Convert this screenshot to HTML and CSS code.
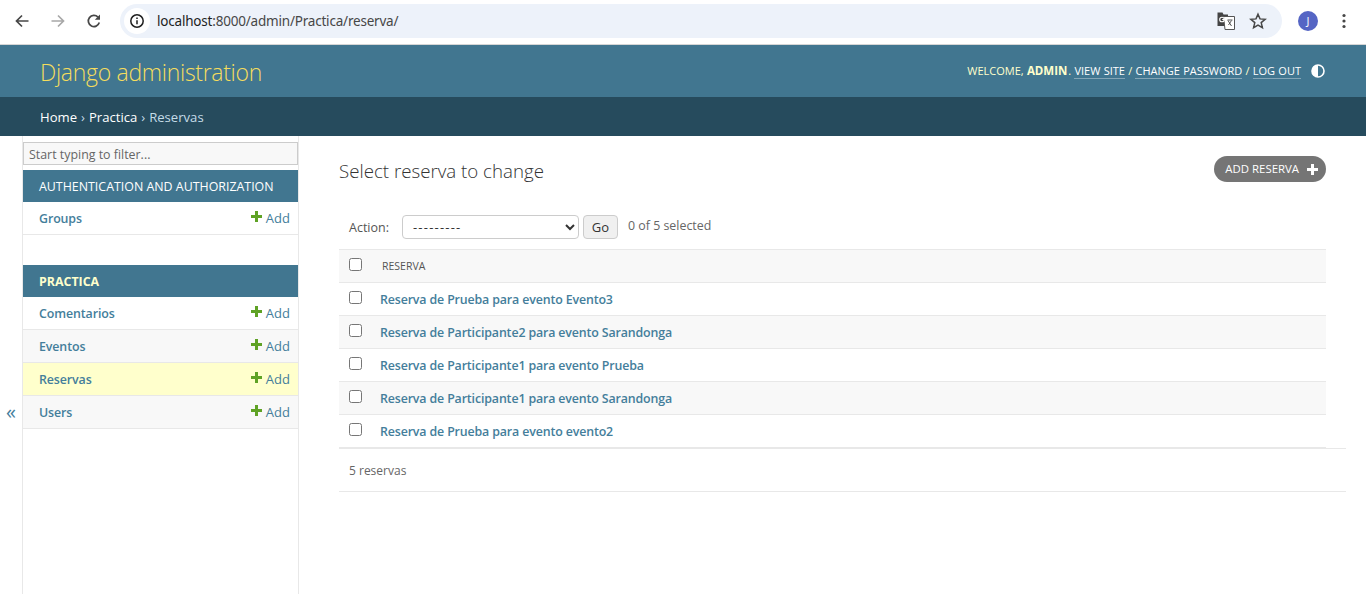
FILE: index.html
```html
<!doctype html>
<html lang="en">
<head>
  <meta charset="utf-8"/>
  <title>Select reserva to change | Django site admin</title>
  <link rel="stylesheet" href="styles.css">
</head>
<body>

  <div class="chrome">
    <svg class="nav-icon" width="16" height="16" viewBox="0 0 16 16"><path d="M14.5 8H2.5M8 2.5 2.5 8 8 13.5" fill="none" stroke="#474747" stroke-width="1.7"/></svg>
    <svg class="nav-icon" width="16" height="16" viewBox="0 0 16 16"><path d="M1.5 8h12M8 2.5 13.5 8 8 13.5" fill="none" stroke="#a8a8a8" stroke-width="1.7"/></svg>
    <svg class="nav-icon" width="16" height="16" viewBox="0 0 16 16"><path d="M13.3 9.6A5.6 5.6 0 1 1 12 4.1" fill="none" stroke="#474747" stroke-width="1.7"/><path d="M14 1.6v5.2H8.8z" fill="#474747"/></svg>
    <div class="omnibox">
      <span class="site-info">
        <svg width="16" height="16" viewBox="0 0 16 16"><circle cx="8" cy="8" r="6.2" fill="none" stroke="#1f1f1f" stroke-width="1.5"/><path d="M8 7.2v4M8 4.6v1.5" stroke="#1f1f1f" stroke-width="1.5"/></svg>
      </span>
      <span class="url">localhost<span class="url-rest">:8000/admin/Practica/reserva/</span></span>
      <svg class="translate" width="18" height="18" viewBox="0 0 18 18"><path d="M0.500 0.500h5l1 2h4.500v11.500H0.500z" fill="#444"/><path d="M6.500 4.500h11v13H8z" fill="#fff" stroke="#555" stroke-width="1"/><circle cx="5" cy="7.500" r="2.300" fill="none" stroke="#fff" stroke-width="1.100"/><path d="M5.200 7.500h2.200" stroke="#fff" stroke-width="1"/><path d="M10.500 8h5M11 8.500l3.500 5.500M14.500 8.500l-3 4.500" stroke="#555" stroke-width="1" fill="none"/></svg>
      <svg class="star" width="18" height="18" viewBox="0 0 18 18"><path d="M9 2.200 11 6.900l5.100.4-3.900 3.300 1.200 5L9 13l-4.400 2.600 1.200-5-3.900-3.300 5.100-.4z" fill="none" stroke="#474747" stroke-width="1.500"/></svg>
    </div>
    <span class="avatar">J</span>
    <svg class="kebab" width="4" height="16" viewBox="0 0 4 16"><circle cx="2" cy="2.500" r="1.600" fill="#474747"/><circle cx="2" cy="8" r="1.600" fill="#474747"/><circle cx="2" cy="13.500" r="1.600" fill="#474747"/></svg>
  </div>

  <header class="site-header">
    <h1 class="branding">Django administration</h1>
    <div class="user-tools">
      Welcome, <strong>admin</strong>. <a href="#">View site</a> / <a href="#">Change password</a> / <a href="#">Log out</a><svg class="theme" width="14" height="14" viewBox="0 0 14 14"><circle cx="7" cy="7" r="6" fill="none" stroke="#fff" stroke-width="1.600"/><path d="M7 1a6 6 0 0 0 0 12z" fill="#fff"/></svg>
    </div>
  </header>

  <nav class="breadcrumbs"><a href="#">Home</a> &rsaquo; <a href="#">Practica</a> &rsaquo; Reservas</nav>

  <div class="layout">
    <div class="toggle">&laquo;</div>

    <aside class="sidebar">
      <input class="filter" type="text" placeholder="Start typing to filter...">

      <div class="app">
        <div class="app-title">Authentication and Authorization</div>
        <div class="model"><a href="#">Groups</a><a class="add" href="#">Add</a></div>
      </div>

      <div class="app">
        <div class="app-title current">Practica</div>
        <div class="model"><a href="#">Comentarios</a><a class="add" href="#">Add</a></div>
        <div class="model alt"><a href="#">Eventos</a><a class="add" href="#">Add</a></div>
        <div class="model selected"><a href="#">Reservas</a><a class="add" href="#">Add</a></div>
        <div class="model alt"><a href="#">Users</a><a class="add" href="#">Add</a></div>
      </div>
    </aside>

    <main class="content">
      <div class="title-row">
        <h2 class="page-title">Select reserva to change</h2>
        <a class="add-button" href="#">Add reserva</a>
      </div>

      <div class="changelist">
        <div class="actions">
          <label class="action-label" for="action">Action:</label>
          <select id="action" class="action-select"><option>---------</option></select>
          <button class="go">Go</button>
          <span class="counter">0 of 5 selected</span>
        </div>

        <div class="row head"><input type="checkbox"><span class="column-name">Reserva</span></div>
        <div class="row"><input type="checkbox"><a href="#">Reserva de Prueba para evento Evento3</a></div>
        <div class="row alt"><input type="checkbox"><a href="#">Reserva de Participante2 para evento Sarandonga</a></div>
        <div class="row"><input type="checkbox"><a href="#">Reserva de Participante1 para evento Prueba</a></div>
        <div class="row alt"><input type="checkbox"><a href="#">Reserva de Participante1 para evento Sarandonga</a></div>
        <div class="row"><input type="checkbox"><a href="#">Reserva de Prueba para evento evento2</a></div>
      </div>

      <p class="paginator">5 reservas</p>
    </main>
  </div>

</body>
</html>
```

FILE: styles.css
```css
:root {
  --primary: #417690;
  --secondary: #264b5d;
  --accent: #f5dd5d;
  --link: #447e9b;
  --hairline: #e8e8e8;
  --darkened: #f8f8f8;
  --plus: #5fa225;
}
* { box-sizing: border-box; }
html, body { height: 100%; }
body {
  margin: 0; height: 594px; overflow: hidden;
  display: flex; flex-direction: column;
  font-family: "Open Sans", "Noto Sans", sans-serif; font-size: 13px; color: #333; background: #fff;
}
a { color: var(--link); text-decoration: none; }

/* browser toolbar */
.chrome {
  height: 45px; flex: none; display: flex; align-items: center;
  padding: 0 0 2px 14px; background: #fff; border-bottom: 1px solid #d6d6d6;
}
.nav-icon { margin-right: 20px; flex: none; }
.nav-icon:nth-child(3) { margin-right: 18px; }
.omnibox {
  width: 1162px; height: 34px; margin-right: 16px; flex: none;
  display: flex; align-items: center;
  padding: 0 15px 0 4px; background: #edf2fa; border-radius: 17px;
}
.site-info {
  width: 26px; height: 26px; border-radius: 50%; background: #fff; flex: none;
  display: flex; align-items: center; justify-content: center;
}
.url { margin-left: 7px; flex: 1; font-family: "Noto Sans", sans-serif; font-size: 13.500px; letter-spacing: -0.2px; color: #1f1f1f; }
.url-rest { color: #474747; }
.translate { margin-right: 14px; }
.avatar {
  width: 20px; height: 20px; border-radius: 50%; background: #5565c4; color: #fff;
  font-size: 11px; line-height: 20px; text-align: center; flex: none;
}
.kebab { margin-left: 24px; }

/* django header */
.site-header {
  height: 52px; flex: none; display: flex; align-items: center; justify-content: space-between;
  padding: 0 41px 0 40px; background: var(--primary); color: #ffc;
}
.branding { margin: 2px 0 0; font-size: 23px; font-weight: 300; color: var(--accent); letter-spacing: -0.3px; }
.user-tools { font-size: 11px; word-spacing: 0.4px; text-transform: uppercase; white-space: nowrap; margin-top: -2px; }
.user-tools a { color: #fff; border-bottom: 1px solid rgba(255,255,255,0.35); }
.user-tools strong { font-size: 11.500px; font-weight: 700; margin-right: 1px; }
.theme { margin-left: 10px; vertical-align: -3px; }
.breadcrumbs {
  height: 39px; flex: none; padding: 0 40px; line-height: 40px;
  background: var(--secondary); color: #c4dce8; font-size: 13.100px; word-spacing: 0.600px;
}
.breadcrumbs a { color: #fff; }

/* body */
.layout { flex: 1; display: flex; min-height: 0; }
.toggle {
  width: 22px; flex: none; padding-top: 262px; text-align: center;
  font-size: 20px; line-height: 28px; color: var(--link);
}
.sidebar { width: 277px; flex: none; border-left: 1px solid var(--hairline); border-right: 1px solid var(--hairline); padding-top: 6px; }
.filter {
  display: block; width: 100%; height: 23px; margin: 0 0 5px; padding: 1px 5px 0;
  border: 1px solid #ccc; background: var(--darkened); font: 12.400px "Open Sans", sans-serif; color: #333;
}
.filter::placeholder { color: #666; }
.app { margin-bottom: 30px; }
.app-title {
  height: 32px; line-height: 33px; padding-left: 16px; background: var(--primary);
  color: #fff; font-size: 12.400px; text-transform: uppercase;
}
.app-title.current { color: #ffc; font-weight: 700; }
.model {
  height: 33px; display: flex; align-items: center; justify-content: space-between;
  padding: 0 8px 0 16px; border-bottom: 1px solid var(--hairline);
  font-size: 13px;
}
.model a:first-child { font-size: 12.400px; letter-spacing: -0.1px; font-weight: 600; }
.model.alt { background: var(--darkened); }
.model.selected { background: #ffc; }
.add { display: flex; align-items: center; gap: 4px; }
.add::before {
  content: ""; width: 11px; height: 11px; margin-top: -3px;
  background:
    linear-gradient(var(--plus), var(--plus)) center / 11px 3px no-repeat,
    linear-gradient(var(--plus), var(--plus)) center / 3px 11px no-repeat;
}

/* content */
.content { flex: 1; min-width: 0; padding: 20px 20px 0 40px; }
.title-row { display: flex; justify-content: space-between; align-items: flex-start; padding-right: 20px; height: 59px; }
.page-title { margin: 0; font-size: 18.700px; font-weight: 300; line-height: 30px; }
.add-button {
  display: flex; align-items: center; gap: 8px; height: 26px; padding: 0 8px 1px 11px;
  background: #757575; color: #fff; border-radius: 13px; font-size: 11.400px; text-transform: uppercase;
}
.add-button::after {
  content: ""; width: 11px; height: 11px; margin-top: 1px;
  background:
    linear-gradient(#fff, #fff) center / 11px 3px no-repeat,
    linear-gradient(#fff, #fff) center / 3px 11px no-repeat;
}
.changelist { margin-right: 20px; }
.actions { height: 34px; display: flex; align-items: flex-start; padding-left: 10px; }
.action-label { margin: 4px 13px 0 0; color: #555; font-size: 12.500px; }
.action-select {
  width: 177px; height: 24px; padding: 0 6px; border: 1px solid #ccc; border-radius: 4px; background: #fff;
  font: 13px "Open Sans", sans-serif; letter-spacing: 1.200px; color: #333;
}
.go {
  width: 35px; height: 24px; margin-left: 4px; padding: 0; border: 1px solid #ccc; border-radius: 4px;
  background: #f0f0f0; font: 13px "Open Sans", sans-serif; color: #333;
}
.counter { margin: 2px 0 0 10px; color: #666; font-size: 12.400px; line-height: 18px; }
.row {
  height: 33px; display: flex; align-items: center; padding-left: 10px;
  border-bottom: 1px solid var(--hairline); font-size: 12.400px; letter-spacing: -0.14px; font-weight: 600;
}
.row input { width: 13px; height: 13px; margin: -3px 18px 0 0; }
.row.alt, .row.head { background: var(--darkened); }
.row.head { border-top: 1px solid var(--hairline); height: 34px; }
.row.head input { margin-right: 20px; }
.column-name { font-size: 10.500px; letter-spacing: 0; font-weight: 400; text-transform: uppercase; color: #555; }
.paginator {
  margin: 0; height: 44px; line-height: 44px; padding-left: 10px;
  border-top: 1px solid #e8e8e8; border-bottom: 1px solid var(--hairline); color: #666; font-size: 12px;
}
```
